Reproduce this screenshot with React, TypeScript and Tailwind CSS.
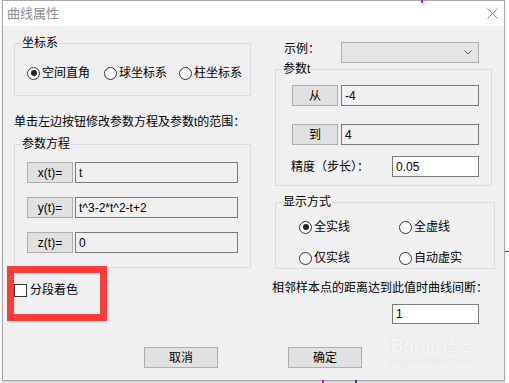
import React from "react";

function Radio({ label, checked = false, className = "" }: { label: string; checked?: boolean; className?: string }) {
  return (
    <div className={`flex items-center h-[16px] ${className}`}>
      <span className="w-[13px] h-[13px] rounded-full border border-[#333] bg-white flex items-center justify-center shrink-0">
        {checked && <span className="w-[6px] h-[6px] rounded-full bg-[#222]" />}
      </span>
      <span className="ml-[2px] leading-[16px]">{label}</span>
    </div>
  );
}

function Group({ title, className = "", children }: { title: string; className?: string; children: React.ReactNode }) {
  return (
    <div className={`relative border border-[#dcdcdc] ${className}`}>
      <span className="absolute left-[6px] top-[-9px] px-[1px] bg-[#f0f0f0] leading-[16px]">{title}</span>
      {children}
    </div>
  );
}

function Btn({ children, className = "" }: { children: React.ReactNode; className?: string }) {
  return (
    <div className={`h-[21px] bg-[#e1e1e1] border border-[#adadad] flex items-center justify-center leading-[16px] ${className}`}>
      {children}
    </div>
  );
}

function Field({ value, white = false, className = "" }: { value: string; white?: boolean; className?: string }) {
  return (
    <div
      className={`h-[21px] border border-[#7a7a7a] flex items-center pl-[3px] leading-[16px] ${
        white ? "bg-white" : "bg-[#f0f0f0]"
      } ${className}`}
    >
      {value}
    </div>
  );
}

export default function App() {
  return (
    <div className="w-[509px] h-[383px] bg-white relative overflow-hidden text-[12px] text-black [font-family:'Liberation_Sans','Noto_Sans_CJK_SC',sans-serif]">
      {/* background marks outside the dialog */}
      <div className="absolute left-[421px] top-0 w-[2px] h-[3px] bg-[#e000e0]" />
      <div className="absolute left-[322px] top-[380px] w-[2px] h-[3px] bg-[#e000e0]" />
      <div className="absolute left-[355px] top-[380px] w-[2px] h-[3px] bg-[#3a3aa8]" />
      <div className="absolute left-[505px] top-[251px] w-[4px] h-[1px] bg-[#3a3ad0]" />

      <div className="ml-[2px] w-[503px] h-[381px] border border-[#a9a9a9] flex flex-col shadow-[0_2px_2px_rgba(0,0,0,0.18)]">
        {/* title bar */}
        <div className="h-[25px] bg-white flex items-center justify-between pl-[4px] pr-[6px]">
          <span className="text-[#8c8c8c] leading-[16px] text-[13px]">曲线属性</span>
          <svg width="11" height="11" viewBox="0 0 11 11" className="mt-[-1px]">
            <path d="M0.5 0.5 L10.5 10.5 M10.5 0.5 L0.5 10.5" stroke="#8a8a8a" strokeWidth="1" fill="none" />
          </svg>
        </div>

        {/* client area */}
        <div className="flex-1 bg-[#f0f0f0] relative">
          <div className="flex h-[321px]">
            {/* left column */}
            <div className="ml-[11px] w-[237px] flex flex-col">
              <Group title="坐标系" className="mt-[17px] h-[53px]">
                <div className="flex pt-[21px] pl-[12px]">
                  <Radio label="空间直角" checked className="w-[77px]" />
                  <Radio label="球坐标系" className="w-[75px]" />
                  <Radio label="柱坐标系" />
                </div>
              </Group>

              <div className="mt-[18px] leading-[16px] whitespace-nowrap">单击左边按钮修改参数方程及参数t的范围：</div>

              <Group title="参数方程" className="mt-[14px] h-[124px]">
                <div className="flex flex-col gap-[14px] pt-[17px] pl-[12px]">
                  <div className="flex">
                    <Btn className="w-[46px]">x(t)=</Btn>
                    <Field value="t" className="ml-[2px] w-[163px]" />
                  </div>
                  <div className="flex">
                    <Btn className="w-[46px]">y(t)=</Btn>
                    <Field value="t^3-2*t^2-t+2" className="ml-[2px] w-[163px]" />
                  </div>
                  <div className="flex">
                    <Btn className="w-[46px]">z(t)=</Btn>
                    <Field value="0" className="ml-[2px] w-[163px]" />
                  </div>
                </div>
              </Group>

              <div className="mt-[14px] flex items-center h-[16px]">
                <span className="w-[13px] h-[13px] border border-[#333] bg-white" />
                <span className="ml-[3px] leading-[16px]">分段着色</span>
              </div>
            </div>

            {/* right column */}
            <div className="ml-[21px] w-[223px] flex flex-col">
              <div className="mt-[16px] flex items-start pl-[12px]">
                <span className="w-[57px] leading-[16px] mt-[-1px]">示例：</span>
                <div className="w-[138px] h-[21px] bg-[#e5e5e5] border border-[#adadad] flex items-center justify-end pr-[6px]">
                  <svg width="8" height="5" viewBox="0 0 8 5">
                    <path d="M0.5 0.5 L4 4 L7.5 0.5" stroke="#555" strokeWidth="1" fill="none" />
                  </svg>
                </div>
              </div>

              <Group title="参数t" className="ml-[3px] mt-[6px] w-[217px] h-[117px]">
                <div className="flex flex-col pt-[15px] pl-[16px]">
                  <div className="flex">
                    <Btn className="w-[46px]">从</Btn>
                    <Field value="-4" className="ml-[3px] w-[138px]" />
                  </div>
                  <div className="flex mt-[18px]">
                    <Btn className="w-[46px]">到</Btn>
                    <Field value="4" className="ml-[3px] w-[138px]" />
                  </div>
                  <div className="flex items-center mt-[11px] ml-[-1px]">
                    <span className="w-[101px] leading-[16px]">精度（步长）：</span>
                    <Field value="0.05" white className="w-[87px]" />
                  </div>
                </div>
              </Group>

              <Group title="显示方式" className="ml-[3px] mt-[16px] w-[220px] h-[67px]">
                <div className="grid grid-cols-[100px_1fr] gap-y-[15px] pt-[16px] pl-[23px]">
                  <Radio label="全实线" checked />
                  <Radio label="全虚线" />
                  <Radio label="仅实线" />
                  <Radio label="自动虚实" />
                </div>
              </Group>

              <div className="mt-[11px] leading-[16px] whitespace-nowrap">相邻样本点的距离达到此值时曲线间断：</div>
              <Field value="1" white className="mt-[8px] ml-[120px] w-[87px] !h-[20px]" />
            </div>
          </div>

          {/* bottom buttons */}
          <div className="flex ml-[141px] gap-[70px]">
            <Btn className="w-[74px]">取消</Btn>
            <Btn className="w-[74px]">确定</Btn>
          </div>

          {/* annotation box */}
          <div className="absolute left-[4px] top-[240px] w-[100px] h-[55px] border-[7px] border-[#fd3b3b]" />

          {/* watermark */}
          <div className="absolute left-[387px] top-[311px] flex flex-col items-center text-[#f6f6f6] [text-shadow:0_0_1px_#d4d4d4]">
            <div className="flex items-end leading-[18px]">
              <span className="text-[18px] font-bold">Bai</span>
              <span className="text-[16px] font-bold mx-[2px]">du</span>
              <span className="text-[14px] font-bold">经验</span>
            </div>
            <span className="text-[10px] leading-[12px]">jingyan.baidu.com</span>
          </div>
        </div>
      </div>
    </div>
  );
}
